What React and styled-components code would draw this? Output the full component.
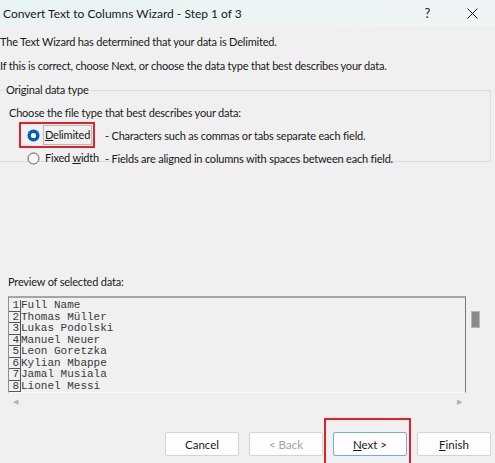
import React from "react";
import styled, { createGlobalStyle } from "styled-components";

const GlobalStyle = createGlobalStyle`
  html, body {
    margin: 0;
    padding: 0;
    background: #f0f0f0;
  }
  body {
    font-family: Lato, "Noto Sans", sans-serif;
    font-size: 11px;
    letter-spacing: -0.2px;
    color: #1a1a1a;
  }
`;

const Window = styled.div`
  width: 495px;
  height: 463px;
  overflow: hidden;
  display: flex;
  flex-direction: column;
  background: #f0f0f0;
`;

const TitleBar = styled.div`
  height: 26px;
  display: flex;
  align-items: center;
  background: linear-gradient(90deg, #e8f3f3, #f1f4f4);
  padding-left: 3px;
  font-size: 12px;
  letter-spacing: 0;
  color: #1a1a1a;
`;

const Title = styled.div`
  flex: 1;
`;

const TitleButton = styled.div`
  width: 45px;
  display: flex;
  justify-content: center;
  align-items: center;
  font-size: 13px;
`;

const Body = styled.div`
  flex: 1;
  display: flex;
  flex-direction: column;
`;

const Line = styled.p`
  margin: ${(p) => p.$top || 0}px 0 0 0;
  padding-left: ${(p) => p.$indent || 0}px;
  line-height: 16px;
  white-space: nowrap;
`;

const Group = styled.fieldset`
  margin: 8px 4px 0 -4px;
  padding: 0 0 6px 12px;
  border: 1px solid #dcdcdc;
  height: 80px;
  box-sizing: border-box;
  legend {
    padding: 0 2px;
    margin-left: -5px;
    line-height: 16px;
  }
`;

const Options = styled.div`
  display: flex;
  flex-direction: column;
  gap: 3px;
  margin-top: 4px;
  padding-left: 16px;
`;

const OptionRow = styled.div`
  display: flex;
  align-items: center;
  height: 20px;
`;

const RadioLabel = styled.div`
  position: relative;
  display: flex;
  align-items: center;
  gap: 4px;
  width: ${(p) => p.$width}px;
  height: 20px;
  padding-left: 2px;
  flex-shrink: 0;
`;

const Highlight = styled.div`
  position: absolute;
  left: -6px;
  top: -3px;
  width: 76px;
  height: 26px;
  border: 2px solid #e3202a;
  box-sizing: border-box;
`;

const FocusText = styled.span`
  outline: ${(p) => (p.$focus ? "1px solid #b8b8b8" : "none")};
  padding: 1px 1px;
  line-height: 16px;
  u {
    text-decoration: underline;
  }
`;

const Hint = styled.span`
  white-space: nowrap;
`;

const Spacer = styled.div`
  height: 112px;
`;

const PreviewGrid = styled.div`
  display: grid;
  grid-template-columns: 458px 26px;
  grid-template-rows: 97px 16px;
  margin-left: 8px;
  margin-top: 6px;
`;

const PreviewBox = styled.div`
  border-top: 2px solid #a5a5a5;
  border-left: 1px solid #8f8f8f;
  border-right: 1px solid #7a7a7a;
  border-bottom: 1px solid #fafafa;
  box-sizing: border-box;
  overflow: hidden;
  padding-top: 2px;
`;

const DataRow = styled.div`
  display: flex;
  height: 11.5px;
  font-family: "Liberation Mono", "Courier New", monospace;
  font-size: 11px;
  letter-spacing: 0;
  line-height: 11.5px;
  color: #3a3a3a;
`;

const RowNum = styled.div`
  width: 12px;
  box-sizing: border-box;
  border-right: 1px solid #555;
  border-bottom: 1px solid #555;
  text-align: right;
  padding-right: 1px;
  flex-shrink: 0;
`;

const VScroll = styled.div`
  position: relative;
`;

const Thumb = styled.div`
  position: absolute;
  left: 5px;
  top: 15px;
  width: 9px;
  height: 17px;
  background: #8a8a8a;
  border: 1px solid #b5b5b5;
  box-sizing: border-box;
`;

const HScroll = styled.div`
  display: flex;
  justify-content: space-between;
  align-items: center;
  padding: 0 4px 0 5px;
`;

const Arrow = styled.span`
  color: #b0b0b0;
  font-size: 7px;
`;

const Footer = styled.div`
  display: flex;
  justify-content: flex-end;
  gap: 10px;
  padding-right: 4px;
  margin-top: 23px;
`;

const ButtonWrap = styled.div`
  position: relative;
`;

const Button = styled.button`
  width: 74px;
  height: 24px;
  background: #fdfdfd;
  border: 1px solid ${(p) => (p.$default ? "#7aa9dc" : "#d3d3d3")};
  border-radius: 2px;
  font-family: Lato, "Noto Sans", sans-serif;
  font-size: 11.5px;
  color: ${(p) => (p.disabled ? "#a3a3a3" : "#1a1a1a")};
  padding: 0;
  u {
    text-decoration: underline;
  }
`;

const ButtonHighlight = styled.div`
  position: absolute;
  left: -9px;
  top: -14px;
  width: 87px;
  height: 48px;
  border: 2px solid #e3202a;
  box-sizing: border-box;
`;

function Radio({ checked }) {
  return (
    <svg width="13" height="13" viewBox="0 0 13 13">
      {checked ? (
        <>
          <circle cx="6.5" cy="6.5" r="6" fill="#005fb8" />
          <circle cx="6.5" cy="6.5" r="2.6" fill="#fff" />
        </>
      ) : (
        <circle cx="6.5" cy="6.5" r="5.5" fill="#f6f6f6" stroke="#5c5c5c" strokeWidth="1" />
      )}
    </svg>
  );
}

const rows = [
  "Full Name",
  "Thomas Müller",
  "Lukas Podolski",
  "Manuel Neuer",
  "Leon Goretzka",
  "Kylian Mbappe",
  "Jamal Musiala",
  "Lionel Messi",
];

export default function App() {
  return (
    <Window>
      <GlobalStyle />
      <TitleBar>
        <Title>Convert Text to Columns Wizard - Step 1 of 3</Title>
        <TitleButton>?</TitleButton>
        <TitleButton>
          <svg width="11" height="11" viewBox="0 0 11 11">
            <path d="M0.5 0.5L10.5 10.5M10.5 0.5L0.5 10.5" stroke="#1a1a1a" strokeWidth="1" />
          </svg>
        </TitleButton>
      </TitleBar>
      <Body>
        <Line $top={8}>The Text Wizard has determined that your data is Delimited.</Line>
        <Line $top={8}>
          If this is correct, choose Next, or choose the data type that best describes your data.
        </Line>
        <Group>
          <legend>Original data type</legend>
          <Line $top={7}>Choose the file type that best describes your data:</Line>
          <Options>
            <OptionRow>
              <RadioLabel $width={78}>
                <Highlight />
                <Radio checked />
                <FocusText $focus>
                  <u>D</u>elimited
                </FocusText>
              </RadioLabel>
              <Hint>- Characters such as commas or tabs separate each field.</Hint>
            </OptionRow>
            <OptionRow>
              <RadioLabel $width={78}>
                <Radio />
                <FocusText>
                  Fixed <u>w</u>idth
                </FocusText>
              </RadioLabel>
              <Hint>- Fields are aligned in columns with spaces between each field.</Hint>
            </OptionRow>
          </Options>
        </Group>
        <Spacer />
        <Line $indent={8}>Preview of selected data:</Line>
        <PreviewGrid>
          <PreviewBox>
            {rows.map((r, i) => (
              <DataRow key={i}>
                <RowNum>{i + 1}</RowNum>
                <span>{r}</span>
              </DataRow>
            ))}
          </PreviewBox>
          <VScroll>
            <Thumb />
          </VScroll>
          <HScroll>
            <Arrow>◀</Arrow>
            <Arrow>▶</Arrow>
          </HScroll>
          <div />
        </PreviewGrid>
        <Footer>
          <Button>Cancel</Button>
          <Button disabled>&lt; Back</Button>
          <ButtonWrap>
            <ButtonHighlight />
            <Button $default>
              <u>N</u>ext &gt;
            </Button>
          </ButtonWrap>
          <Button>
            <u>F</u>inish
          </Button>
        </Footer>
      </Body>
    </Window>
  );
}
